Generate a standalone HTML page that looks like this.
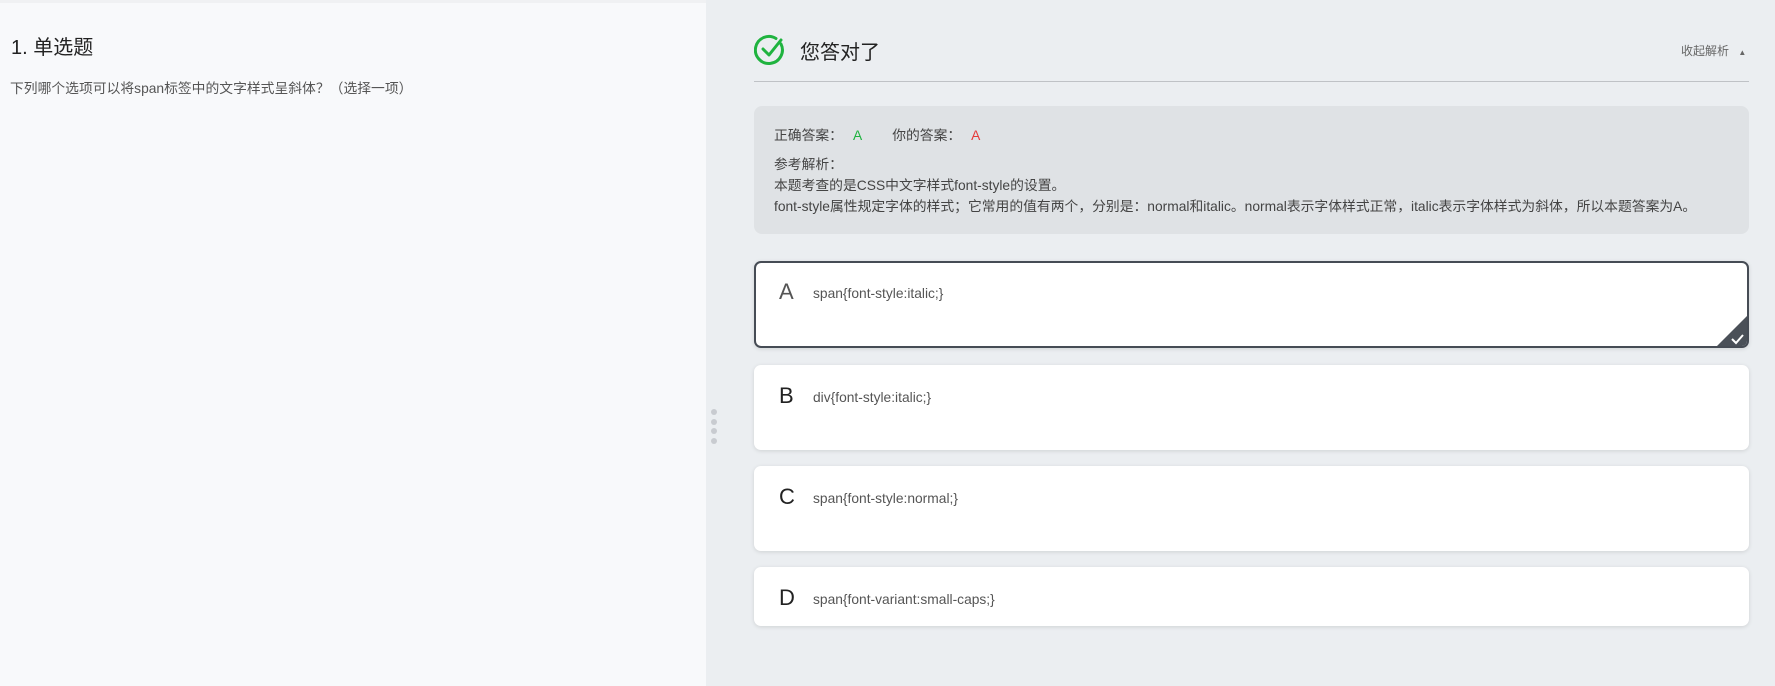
<!DOCTYPE html>
<html><head><meta charset="utf-8"><style>
*{margin:0;padding:0;box-sizing:border-box}
body{width:1775px;height:686px;font-family:"Liberation Sans","Noto Sans CJK SC",sans-serif;background:#ebeef1;position:relative;overflow:hidden;color:#333}
.left{position:absolute;left:0;top:0;width:706px;height:686px;background:#f8f9fb;border-top:3px solid #f0f1f3}
.t1{position:absolute;left:11px;top:28px;font-size:20px;color:#222}
.q{position:absolute;left:10px;top:74px;font-size:13.8px;color:#555}
.dots{position:absolute;left:711px;top:409px}
.dots i{display:block;width:6px;height:6px;border-radius:3px;background:#c8cbd0;margin-bottom:3.5px}
.hd{position:absolute;left:754px;top:34px}
.ttl{position:absolute;left:800px;top:36px;font-size:20px;color:#222}
.col{position:absolute;left:1681px;top:42px;font-size:12px;color:#666}
.line{position:absolute;left:754px;top:81px;width:995px;height:1px;background:#bfc2c6}
.box{position:absolute;left:754px;top:106px;width:995px;height:128px;background:#dfe2e5;border-radius:8px;font-size:13.8px;color:#444;padding:18px 20px;line-height:23.5px}
.opt{position:absolute;left:754px;width:995px;background:#fff;border-radius:7px;box-shadow:0 1px 4px rgba(0,0,0,.12)}
.opt b{position:absolute;left:25px;top:18px;font-weight:normal;font-size:22px;color:#222}
.opt span{position:absolute;left:59px;top:25px;font-size:13.8px;color:#555}
</style></head><body>
<div class="left"><div class="t1">1. 单选题</div><div class="q">下列哪个选项可以将span标签中的文字样式呈斜体？（选择一项）</div></div>
<div class="dots"><i></i><i></i><i></i><i></i></div>
<svg class="hd" width="32" height="32" viewBox="0 0 32 32"><path d="M27 10 A13.5 13.5 0 1 1 22 4.5" fill="none" stroke="#1fb33f" stroke-width="3" stroke-linecap="round"/><path d="M9 15 L15 21 L27 6" fill="none" stroke="#1fb33f" stroke-width="3" stroke-linecap="round" stroke-linejoin="round"/></svg>
<div class="ttl">您答对了</div>
<div class="col">收起解析 <span style="font-size:8px;margin-left:6px">▲</span></div>
<div class="line"></div>
<div class="box">正确答案：<span style="color:#1fb33f;margin:0 30px 0 10px">A</span>你的答案：<span style="color:#e53a3a;margin-left:10px">A</span><div style="margin-top:6px;line-height:21px">参考解析：<br>本题考查的是CSS中文字样式font-style的设置。<br>font-style属性规定字体的样式；它常用的值有两个，分别是：normal和italic。normal表示字体样式正常，italic表示字体样式为斜体，所以本题答案为A。</div></div>
<div class="opt" style="top:261px;height:87px;border:2px solid #464c55;overflow:hidden"><b style="left:23px;top:16px;color:#555">A</b><span style="left:57px;top:23px">span{font-style:italic;}</span>
<svg style="position:absolute;right:-1px;bottom:-1px" width="32" height="32"><path d="M32 0 L32 32 L0 32 Z" fill="#4a5058"/><path d="M16 24 L20 28 L27 20" fill="none" stroke="#fff" stroke-width="2"/></svg></div>
<div class="opt" style="top:365px;height:85px"><b>B</b><span>div{font-style:italic;}</span></div>
<div class="opt" style="top:466px;height:85px"><b>C</b><span>span{font-style:normal;}</span></div>
<div class="opt" style="top:567px;height:59px"><b>D</b><span>span{font-variant:small-caps;}</span></div>
</body></html>
